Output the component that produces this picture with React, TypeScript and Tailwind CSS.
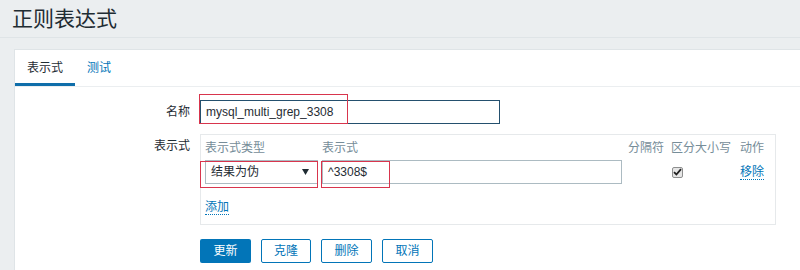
const font = { fontFamily: '"Liberation Sans", "Noto Sans CJK SC", sans-serif' };

function Check() {
  return (
    <span className="flex h-[11px] w-[11px] items-center justify-center rounded-[2px] border border-[#8e8f8f] bg-[#e6e6e6]">
      <svg width="9" height="8" viewBox="0 0 9 8">
        <path d="M1 4.2 L3.4 6.5 L8 1.2" fill="none" stroke="#222" strokeWidth="1.8" />
      </svg>
    </span>
  );
}

export default function App() {
  return (
    <div
      className="relative h-[270px] w-[800px] overflow-hidden bg-[#ebeef0] text-[12px] text-[#1f2c33]"
      style={font}
    >
      {/* page title */}
      <div className="flex h-[38px] items-center border-b border-[#dfe4e7] px-[12px] text-[21px] leading-none text-[#1f2c33]">
        正则表达式
      </div>

      <div className="ml-[14px] mt-[11px] w-[800px] border border-r-0 border-[#dfe4e7] bg-white">
        {/* tabs */}
        <div className="flex h-[37px] border-b border-[#ebeef0]">
          <div className="flex items-center border-b-[3px] border-[#0f6eaa] px-[12px] pt-[3px]">表示式</div>
          <div className="flex items-center px-[12px] pb-0 text-[#0275b8]">测试</div>
        </div>

        {/* form */}
        <div className="pt-[13px]">
          <div className="flex">
            <div className="w-[175px] text-right leading-[24px]">名称</div>
            <div className="ml-[10px] h-[24px] w-[300px] border border-[#24506e] px-[5px] leading-[22px]">
              mysql_multi_grep_3308
            </div>
          </div>

          <div className="mt-[10px] flex">
            <div className="w-[175px] text-right leading-[24px]">表示式</div>
            <div className="ml-[10px] h-[91px] w-[576px] border border-[#e6e9eb] px-[4px]">
              <div className="flex h-[25px] items-center text-[#768d99]">
                <div className="w-[113px]">表示式类型</div>
                <div className="ml-[4px] w-[300px]">表示式</div>
                <div className="ml-[6px] w-[37px]">分隔符</div>
                <div className="ml-[6px] w-[60px]">区分大小写</div>
                <div className="ml-[9px]">动作</div>
              </div>
              <div className="flex h-[24px] items-center">
                <div className="flex h-[24px] w-[113px] items-center justify-between border border-[#acbbc2] pl-[5px] pr-[8px]">
                  <span>结果为伪</span>
                  <svg width="7" height="6" viewBox="0 0 7 6">
                    <path d="M0 0 H7 L3.5 6 Z" fill="#1f2c33" />
                  </svg>
                </div>
                <div className="ml-[4px] h-[24px] w-[300px] border border-[#acbbc2] px-[5px] leading-[22px]">^3308$</div>
                <div className="ml-[6px] w-[37px]" />
                <div className="ml-[6px] flex w-[60px] pl-[1px]">
                  <Check />
                </div>
                <div className="ml-[9px]">
                  <span className="border-b border-dotted border-[#0275b8] leading-[14px] text-[#0275b8]">移除</span>
                </div>
              </div>
              <div className="mt-[14px]">
                <span className="border-b border-dotted border-[#0275b8] text-[#0275b8]">添加</span>
              </div>
            </div>
          </div>

          <div className="ml-[185px] mt-[14px] flex gap-[10px] pb-[20px]">
            <button className="h-[24px] w-[51px] rounded-[2px] bg-[#0275b8] text-white">更新</button>
            <button className="h-[24px] w-[50px] rounded-[2px] border border-[#0275b8] bg-white text-[#0275b8]">克隆</button>
            <button className="h-[24px] w-[51px] rounded-[2px] border border-[#0275b8] bg-white text-[#0275b8]">删除</button>
            <button className="h-[24px] w-[51px] rounded-[2px] border border-[#0275b8] bg-white text-[#0275b8]">取消</button>
          </div>
        </div>
      </div>

      {/* red highlight boxes drawn over the form */}
      <div className="absolute left-[199px] top-[94px] h-[30px] w-[149px] border border-[#d8354d]" />
      <div className="absolute left-[200px] top-[161px] h-[27px] w-[118px] border border-[#d8354d]" />
      <div className="absolute left-[321px] top-[161px] h-[27px] w-[69px] border border-[#d8354d]" />
    </div>
  );
}
